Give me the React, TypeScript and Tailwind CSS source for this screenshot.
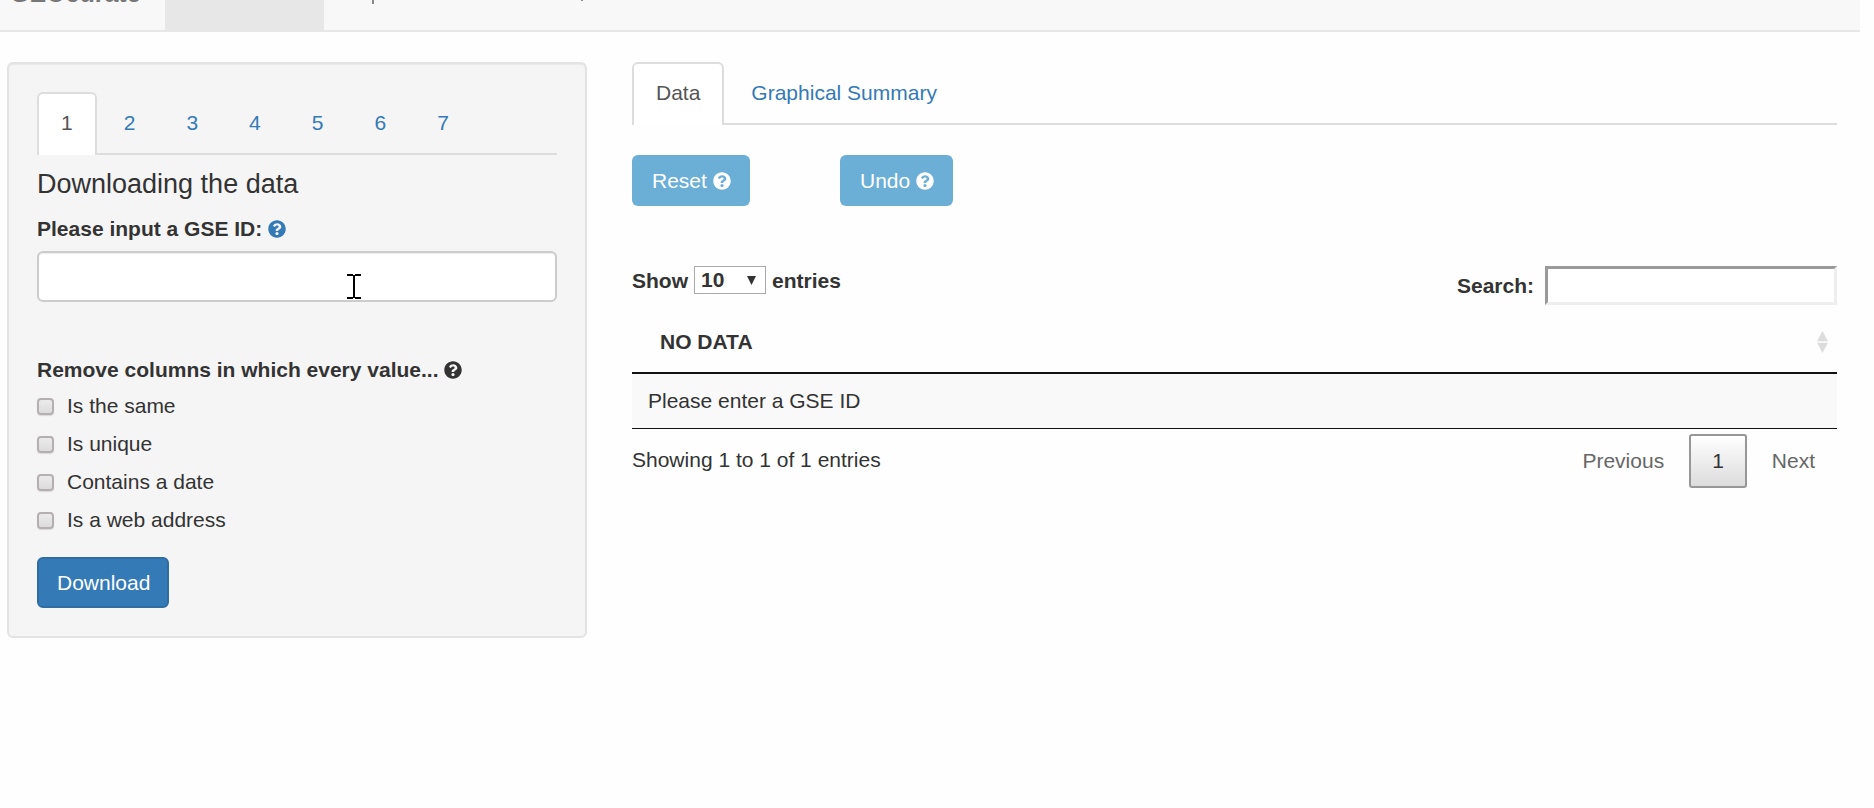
import { useState, type ReactNode } from "react";
import { FaQuestionCircle } from "react-icons/fa";

const steps = ["1", "2", "3", "4", "5", "6", "7"];
const filters = ["Is the same", "Is unique", "Contains a date", "Is a web address"];

function Tab({ active, children, onClick }: { active: boolean; children: ReactNode; onClick: () => void }) {
  return (
    <li className="-mb-[2px]">
      <button
        type="button"
        onClick={onClick}
        className={
          active
            ? "rounded-t-md border-2 border-b-0 border-[#ddd] bg-white px-[22px] pt-[14px] pb-[17px] text-[#555]"
            : "rounded-t-md border-2 border-b-0 border-transparent px-[22px] pt-[14px] pb-[17px] text-[#337ab7]"
        }
      >
        {children}
      </button>
    </li>
  );
}

function Help() {
  return <FaQuestionCircle aria-hidden="true" className="inline-block size-[18px] align-[-2px]" />;
}

export default function App() {
  const [step, setStep] = useState("1");
  const [view, setView] = useState("Data");

  return (
    <div className="min-h-screen bg-[#fefefe] font-['Liberation_Sans',Arial,sans-serif] text-[21px] leading-[30px] text-[#333]">
      <div className="mr-[14px] flex h-8 items-end overflow-hidden border-b-2 border-[#e7e7e7] bg-[#f8f8f8] text-[#777]">
        <a href="#home" className="w-[165px] shrink-0 pb-[22px] pl-[10px] text-[25px] leading-[30px]">
          <b>GEOcurate</b>
        </a>
        <div className="h-full w-[159px] shrink-0 bg-[#e7e7e7]" />
        {/* lower ends of the scrolled-off menu labels */}
        <svg className="ml-12 h-[4px] w-[212px] self-start" viewBox="0 0 212 4" aria-hidden="true">
          <path d="M0 0H2V4H0ZM209 0H211V1H209Z" fill="#8a8a8a" />
        </svg>
      </div>

      <div className="grid grid-cols-[580fr_1205fr] items-start gap-x-[45px] pt-[30px] pr-[37px] pl-[7px]">
        <form
          onSubmit={(e) => e.preventDefault()}
          className="relative rounded-md border-2 border-[#e3e3e3] bg-[#f5f5f5] p-7 shadow-[inset_0_1px_1px_rgba(0,0,0,0.05)]"
        >
          <ul className="flex gap-[3px] border-b-2 border-[#ddd]">
            {steps.map((s) => (
              <Tab key={s} active={s === step} onClick={() => setStep(s)}>
                {s}
              </Tab>
            ))}
          </ul>
          <h4 className="mt-[14px] text-[27px] leading-[30px]">Downloading the data</h4>
          <label htmlFor="gse" className="mt-[15px] block font-bold">
            Please input a GSE ID:{" "}
            <span className="text-[#337ab7]">
              <Help />
            </span>
          </label>
          <input
            id="gse"
            type="text"
            className="mt-[7px] block h-[51px] w-full rounded-md border-2 border-[#ccc] bg-white px-[18px] shadow-[inset_0_1px_1px_rgba(0,0,0,0.075)] outline-none"
          />
          <fieldset className="mt-[53px]">
            <legend className="font-bold">
              Remove columns in which every value... <Help />
            </legend>
            <div className="mt-[6px] flex flex-col gap-2">
              {filters.map((f) => (
                <label key={f} className="flex items-center gap-[13px]">
                  <input
                    type="checkbox"
                    className="size-[17px] appearance-none rounded-[4px] border-2 border-[#b5afb2] bg-linear-to-b from-[#ebebeb] to-[#dcdcdc] shadow-[0_1px_1px_rgba(0,0,0,0.12)]"
                  />
                  {f}
                </label>
              ))}
            </div>
          </fieldset>
          <button type="submit" className="mt-[22px] block h-[51px] rounded-md border-2 border-[#2e6da4] bg-[#337ab7] pr-[17px] pl-[18px] text-white">
            Download
          </button>
          <svg className="absolute top-[210px] left-[338px] h-[25px] w-[14px]" viewBox="0 0 14 25" aria-hidden="true">
            <path d="M0 1H6M8 1H14M0 24H6M8 24H14M7 1V24" stroke="#000" strokeWidth="2" />
          </svg>
        </form>

        <main>
          <ul className="flex gap-[3px] border-b-2 border-[#ddd]">
            {["Data", "Graphical Summary"].map((v) => (
              <Tab key={v} active={v === view} onClick={() => setView(v)}>
                {v}
              </Tab>
            ))}
          </ul>

          <div className="mt-[30px] flex">
            <div className="w-[208px]">
              <button type="button" className="h-[51px] rounded-md bg-[#6baed6] pr-[19px] pl-5 text-white">
                Reset <Help />
              </button>
            </div>
            <button type="button" className="h-[51px] rounded-md bg-[#6baed6] pr-[19px] pl-5 text-white">
              Undo <Help />
            </button>
          </div>

          <div className="mt-[60px] flex items-start justify-between font-bold">
            <label className="flex items-start gap-[6px]">
              Show
              <span className="relative">
                <select className="block h-7 w-[72px] appearance-none border border-[#a9a9a9] bg-white pl-[6px] leading-[26px]">
                  <option>10</option>
                  <option>25</option>
                  <option>50</option>
                </select>
                <svg className="pointer-events-none absolute top-[10px] right-[10px] h-[9px] w-[9px]" viewBox="0 0 9 9" aria-hidden="true">
                  <path d="M0 0H9L4.5 9Z" fill="#333" />
                </svg>
              </span>
              entries
            </label>
            <label className="flex items-center gap-[11px]">
              Search:
              <input
                type="search"
                className="h-[39px] w-[292px] appearance-none border-3 border-t-[#9a9a9a] border-r-[#eee] border-b-[#eee] border-l-[#9a9a9a] bg-white px-1 outline-none"
              />
            </label>
          </div>

          <table className="mt-[7px] w-full border-separate border-spacing-0 text-left">
            <thead>
              <tr>
                <th className="border-b-2 border-[#111] py-[15px] pr-[9px] pl-7 font-bold">
                  <div className="flex items-center justify-between">
                    NO DATA
                    <svg className="h-[22px] w-[11px]" viewBox="0 0 11 22" aria-hidden="true">
                      <path d="M0 10.3L5.5 0L11 10.3ZM0 11.7L5.5 22L11 11.7Z" fill="#dcdcdc" />
                    </svg>
                  </div>
                </th>
              </tr>
            </thead>
            <tbody>
              <tr>
                <td className="border-b border-[#111] bg-[#f9f9f9] px-4 py-3">Please enter a GSE ID</td>
              </tr>
            </tbody>
          </table>

          <div className="mt-[5px] flex items-start justify-between">
            <p className="pt-[11px]">Showing 1 to 1 of 1 entries</p>
            <nav className="flex gap-[3px]">
              <button type="button" className="h-[54px] px-[22px] text-[#666]">
                Previous
              </button>
              <button type="button" className="h-[54px] rounded-[3px] border-2 border-[#979797] bg-linear-to-b from-white to-[#dcdcdc] px-[21px]">
                1
              </button>
              <button type="button" className="h-[54px] px-[22px] text-[#666]">
                Next
              </button>
            </nav>
          </div>
        </main>
      </div>
    </div>
  );
}
